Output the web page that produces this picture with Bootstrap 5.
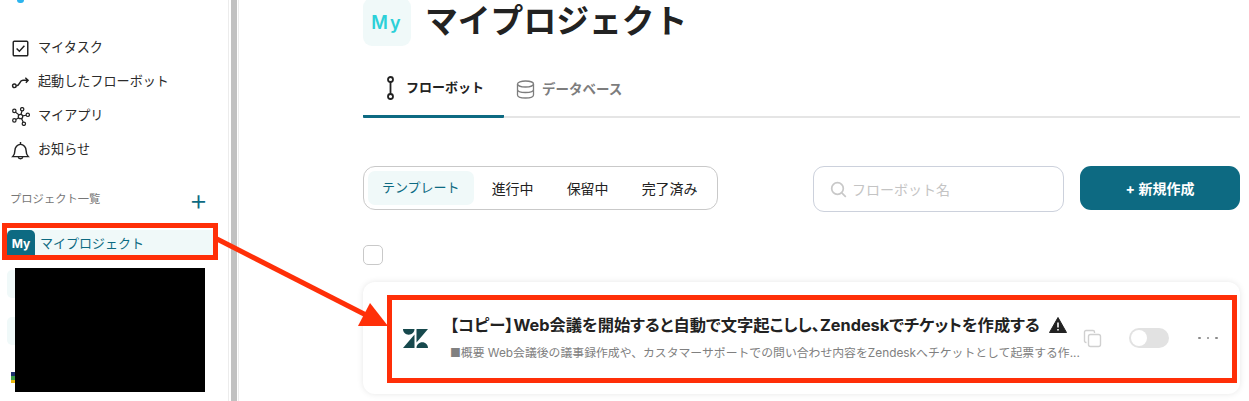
<!DOCTYPE html>
<html lang="ja">
<head>
  <meta charset="UTF-8">
  <meta name="viewport" content="width=device-width, initial-scale=1.0">
  <title>マイプロジェクト</title>
  <link href="https://cdn.jsdelivr.net/npm/bootstrap@5.3.0/dist/css/bootstrap.min.css" rel="stylesheet">
  <style>
    html, body { height: 401px; overflow: hidden; }
    body { font-family: "Inter", "Noto Sans CJK JP", sans-serif; color: #222; background: #fff; position: relative; }
    .shell { height: 401px; }
    .side { width: 229px; margin-right: 2px; flex: none; border-right: 1px solid #ececec; }
    .side-logo { width: 7px; height: 3px; margin: 0 0 28px 17px; background: #2cb4ee; border-radius: 0 0 4px 4px; }
    .side-item { height: 34px; padding-left: 11px; gap: 8px; font-size: 13.1px; color: #2b2b2b; }
    .side-item svg { width: 19px; height: 19px; flex: none; }
    .side-head { margin-top: 15px; padding: 0 20px 0 10px; height: 34px; font-size: 11.3px; color: #777; }
    .side-plus { color: #0d6a82; font-size: 29px; font-weight: 300; line-height: 1; }
    .proj-row { margin: 14px 15px 0 7px; height: 27px; background: #f0f9f9; gap: 5px; color: #0d6a82; font-size: 13px; }
    .proj-tile { width: 28px; height: 27px; background: #0d6a82; color: #fff; font-size: 12px; font-weight: 700; border-radius: 5px 5px 0 0; }
    .proj-ghost { width: 28px; height: 28px; margin: 13px 0 0 7px; background: #f0f9f9; border-radius: 5px; }
    .proj-ghost + .proj-ghost { margin-top: 19px; }
    .proj-thumb { width: 4px; height: 11px; margin: 27px 0 0 11px; background: linear-gradient(#1d2f6b 0 35%, #3b9b46 35% 70%, #e9b90f 70%); }
    .side-scroll { width: 6px; flex: none; background: #c1c1c1; }
    .side-line { width: 2px; flex: none; border-right: 1px solid #ececec; }
    .main-area { padding: 0 9px 0 124px; min-width: 0; flex: 1; }
    .head-row { margin-top: -2px; gap: 14px; }
    .head-tile { width: 48px; height: 48px; background: #f0f9f9; border-radius: 9px; color: #2cd0d8; font-size: 18px; font-weight: 600; letter-spacing: 2px; }
    .head-title { font-size: 32.8px; font-weight: 700; margin: 0; color: #222; }
    .tab-row { margin-top: 17px; height: 55px; border-bottom: 2px solid #e5e5e5; }
    .tab-on, .tab-off { font-size: 13px; font-weight: 700; height: 55px; padding-bottom: 2px; }
    .tab-on { color: #222; gap: 10px; padding-left: 22px; border-bottom: 3px solid #0d6a82; border-radius: 0 0 1px 1px; width: 141px; }
    .tab-off { color: #7d7d7d; gap: 7px; padding-left: 12px; font-size: 13.5px; }
    .tool-row { margin-top: 48px; }
    .seg { height: 44px; width: 355px; border: 1px solid #c9c9c9; border-radius: 12px; padding: 4px; }
    .seg-item { font-size: 14px; color: #222; padding: 0 15px 0 18px; height: 34px; border-radius: 7px; white-space: nowrap; }
    .seg-on { background: #f0f9f9; color: #0d6a82; padding: 0 14px; font-size: 13px; }
    .search-box { width: 251px; height: 46px; border: 1px solid #ccd1dc; border-radius: 11px; padding-left: 16px; gap: 5px; color: #c4c4c4; font-size: 14px; margin-right: 16px; }
    .new-btn { width: 160px; height: 44px; background: #0d6a82; color: #fff; font-size: 14px; font-weight: 700; border: 0; border-radius: 11px; }
    .check-box { width: 20px; height: 20px; border: 1px solid #c9c9c9; border-radius: 5px; margin-top: 33px; }
    .flow-card { margin-top: 17px; height: 112px; border-radius: 12px; box-shadow: 0 0 6px rgba(0,0,0,.1); padding: 0 22px 0 40px; }
    .zd-logo { width: 25px; height: 19px; flex: none; }
    .flow-text { margin-left: 22px; width: 630px; }
    .flow-title { font-size: 16.3px; font-weight: 700; color: #222; line-height: 22px; white-space: nowrap; font-feature-settings: "palt"; }
    .flow-desc { font-size: 11.85px; color: #808080; line-height: 17px; margin-top: 9px; white-space: nowrap; overflow: hidden; }
    .flow-warn { width: 18px; height: 16px; margin-left: 5px; vertical-align: -2px; }
    .flow-copy { width: 19px; height: 19px; margin-left: 3px; }
    .flow-toggle { width: 40px; height: 20px; background: #e2e2e2; border-radius: 10px; margin-left: 27px; padding: 1px; }
    .flow-toggle span { width: 16px; height: 16px; margin: 1px; background: #fff; border-radius: 50%; display: block; }
    .flow-dots { gap: 6px; margin-left: 29px; }
    .flow-dots span { width: 2.500px; height: 2.500px; border-radius: 50%; background: #8a8a8a; }
    .mark-box { position: absolute; border: 5px solid #ff2f08; pointer-events: none; }
    .mark-side { left: 2px; top: 223px; width: 216px; height: 37px; }
    .mark-card { left: 387px; top: 295px; width: 850px; height: 88px; }
    .black-out { position: absolute; left: 15px; top: 268px; width: 190px; height: 124px; background: #000; }
    .mark-arrow { position: absolute; left: 0; top: 0; width: 1249px; height: 401px; pointer-events: none; }
  </style>
</head>
<body>
  <div class="shell d-flex">
    <!-- サイドバー -->
    <div class="side">
      <div class="side-logo"></div>
      <div class="side-item d-flex align-items-center">
        <svg viewBox="0 0 17 17" fill="none" stroke="#222" stroke-width="1.300"><rect x="2" y="2" width="13" height="13" rx="1"/><path d="M5 8.500l2.500 2.500 4.500-5"/></svg>
        <span>マイタスク</span>
      </div>
      <div class="side-item d-flex align-items-center">
        <svg viewBox="0 0 17 17" fill="none" stroke="#222" stroke-width="1.300"><circle cx="3" cy="11.500" r="1.600"/><path d="M4.700 11.500c3.500 0 2.500-5 6-5h4.500M12.800 4.300l2.500 2.200-2 2.200"/></svg>
        <span>起動したフローボット</span>
      </div>
      <div class="side-item d-flex align-items-center">
        <svg viewBox="0 0 17 17" fill="none" stroke="#222" stroke-width="1.100"><circle cx="8.500" cy="8.500" r="2"/><circle cx="3" cy="3.500" r="1.500"/><circle cx="10" cy="2" r="1.500"/><circle cx="15" cy="7" r="1.500"/><circle cx="3" cy="12" r="1.500"/><circle cx="11.500" cy="15" r="1.500"/><path d="M4 4.600l3 2.400M9.800 3.500l-.8 3M13.600 7.400l-3.200.6M4.300 11.200l2.600-1.600M10.900 13.500l-1.500-3.200"/></svg>
        <span>マイアプリ</span>
      </div>
      <div class="side-item d-flex align-items-center">
        <svg viewBox="0 0 17 17" fill="none" stroke="#222" stroke-width="1.300"><path d="M1.500 14h14c-1.500-1.500-2-2.500-2-5.500 0-3-2.200-5.500-5-5.500S3.500 5.500 3.500 8.500c0 3-.5 4-2 5.500z"/><path d="M8.500 1v2M6.500 14.500c.3 1.800 3.700 1.800 4 0"/></svg>
        <span>お知らせ</span>
      </div>
      <div class="side-head d-flex align-items-center justify-content-between">
        <span>プロジェクト一覧</span><span class="side-plus">+</span>
      </div>
      <div class="proj-row d-flex align-items-center">
        <div class="proj-tile d-flex align-items-center justify-content-center">My</div>
        <span>マイプロジェクト</span>
      </div>
      <div class="proj-ghost"></div>
      <div class="proj-ghost"></div>
      <div class="proj-thumb"></div>
    </div>
    <div class="side-scroll"></div>
    <div class="side-line"></div>

    <!-- メイン -->
    <div class="main-area">
      <div class="head-row d-flex align-items-center">
        <div class="head-tile d-flex align-items-center justify-content-center">My</div>
        <h1 class="head-title">マイプロジェクト</h1>
      </div>
      <div class="tab-row d-flex">
        <div class="tab-on d-flex align-items-center">
          <svg width="11" height="24" viewBox="0 0 11 24" fill="none" stroke="#222" stroke-width="1.800"><circle cx="5.500" cy="3.500" r="2.500"/><circle cx="5.500" cy="20.500" r="2.500"/><path d="M5.500 6v12"/></svg>
          <span>フローボット</span>
        </div>
        <div class="tab-off d-flex align-items-center">
          <svg width="19" height="19" viewBox="0 0 19 19" fill="none" stroke="#7d7d7d" stroke-width="1.300"><ellipse cx="9.500" cy="4" rx="8" ry="3"/><path d="M1.500 4v11c0 1.700 3.500 3 8 3s8-1.300 8-3V4M1.500 9.500c0 1.700 3.500 3 8 3s8-1.300 8-3"/></svg>
          <span>データベース</span>
        </div>
      </div>
      <div class="tool-row d-flex align-items-start">
        <div class="seg d-flex align-items-center">
          <div class="seg-item seg-on d-flex align-items-center">テンプレート</div>
          <div class="seg-item d-flex align-items-center">進行中</div>
          <div class="seg-item d-flex align-items-center">保留中</div>
          <div class="seg-item d-flex align-items-center">完了済み</div>
        </div>
        <div class="search-box d-flex align-items-center ms-auto">
          <svg width="17" height="17" viewBox="0 0 17 17" fill="none" stroke="#c8c8c8" stroke-width="1.700"><circle cx="7.500" cy="7.500" r="5.800"/><path d="M11.800 11.800l4 4"/></svg>
          <span>フローボット名</span>
        </div>
        <button class="new-btn" type="button">+ 新規作成</button>
      </div>
      <div class="check-box"></div>
      <div class="flow-card d-flex align-items-center">
        <svg class="zd-logo" viewBox="0 0 25 19" fill="#17494d"><path d="M11.500 5.500V19H0zM11.500 0c0 3.200-2.600 5.700-5.800 5.700S0 3.200 0 0zM13.500 19c0-3.200 2.600-5.700 5.800-5.700S25 15.800 25 19zM13.500 13.500V0H25z"/></svg>
        <div class="flow-text">
          <div class="flow-title">【コピー】Web会議を開始すると自動で文字起こしし、Zendeskでチケットを作成する
            <svg class="flow-warn" viewBox="0 0 18 16"><path d="M9 .5L17.500 15.500H.5z" fill="#222" stroke="#222" stroke-linejoin="round"/><path d="M9 5.500v5M9 12v1.500" stroke="#fff" stroke-width="1.600"/></svg>
          </div>
          <div class="flow-desc">■概要 Web会議後の議事録作成や、カスタマーサポートでの問い合わせ内容をZendeskへチケットとして起票する作...</div>
        </div>
        <svg class="flow-copy" viewBox="0 0 19 19" fill="none" stroke="#d0d0d0" stroke-width="1.400"><path d="M3.500 13.500H3A1.500 1.500 0 0 1 1.500 12V3A1.500 1.500 0 0 1 3 1.500h7A1.500 1.500 0 0 1 11.500 3v1"/><rect x="5.500" y="5.500" width="12" height="12" rx="2"/></svg>
        <div class="flow-toggle"><span></span></div>
        <div class="flow-dots d-flex"><span></span><span></span><span></span></div>
      </div>
    </div>
  </div>

  <!-- 注釈 -->
  <div class="black-out"></div>
  <div class="mark-box mark-side"></div>
  <div class="mark-box mark-card"></div>
  <svg class="mark-arrow" viewBox="0 0 1249 401"><path d="M217 239L366 315" stroke="#ff2f08" stroke-width="5" fill="none"/><path d="M388 326L370 303 358 326z" fill="#ff2f08"/></svg>

  <script src="https://cdn.jsdelivr.net/npm/bootstrap@5.3.0/dist/js/bootstrap.bundle.min.js"></script>
</body>
</html>
